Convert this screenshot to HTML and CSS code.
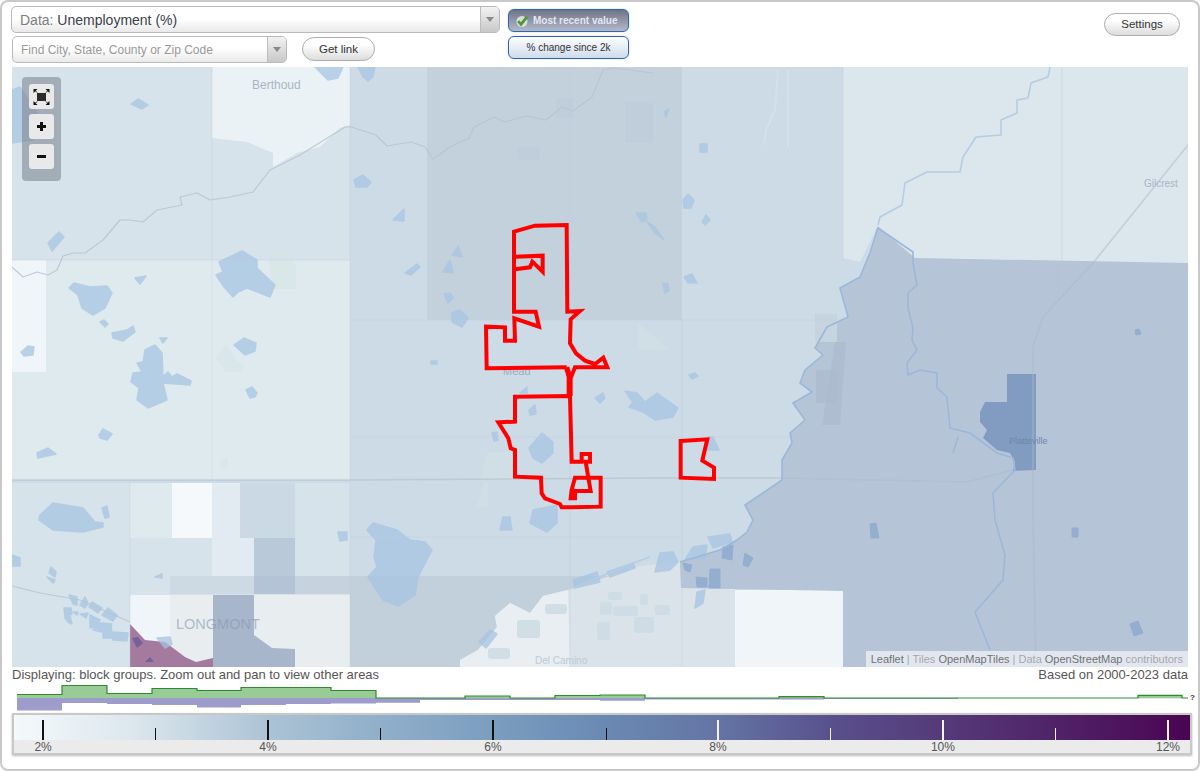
FILE: index.html
```html
<!DOCTYPE html>
<html lang="en">
<head>
<meta charset="utf-8">
<title>Unemployment map</title>
<link rel="stylesheet" href="styles.css">
</head>
<body>
<div class="frame">
  <header class="toolbar">
    <div class="selectors">
      <div class="combo combo-data">
        <div class="combo-text"><span class="muted">Data:</span> Unemployment (%)</div>
        <div class="combo-arrow"><span class="caret"></span></div>
      </div>
      <div class="find-row">
        <div class="combo combo-find">
          <div class="combo-text">Find City, State, County or Zip Code</div>
          <div class="combo-arrow"><span class="caret"></span></div>
        </div>
        <button class="pill pill-link">Get link</button>
      </div>
    </div>
    <div class="toggles">
      <button class="toggle toggle-on">
        <svg class="check" viewBox="0 0 14 14" width="14" height="14"><circle cx="7" cy="7.500" r="5.500" fill="#d9dde2"/><path d="M3.200 7.200 6 10.400 12 2.800" fill="none" stroke="#4f9a2e" stroke-width="2.800"/></svg>
        Most recent value
      </button>
      <button class="toggle">% change since 2k</button>
    </div>
    <button class="pill pill-settings">Settings</button>
  </header>

  <main class="map">
    <svg class="map-art" viewBox="12 67 1176 600" width="1176" height="600">
      <!-- choropleth tiles -->
      <rect class="t-mid" x="12" y="67" width="1176" height="600"/>
      <rect class="t-a" x="12" y="67" width="338" height="194"/>
      <polygon class="t-white" points="212,67 350,67 350,125 340,128 320,147 297,153 273,167 273,153 247,142 212,138"/>
      <rect class="t-c" x="12" y="260" width="338" height="220"/>
      <rect class="t-f" x="12" y="260" width="34" height="112"/>
      <rect class="t-dark" x="427" y="67" width="255" height="253"/>
      <polygon class="t-top" points="843,67 1188,67 1188,264 915,258 878,226 860,262 843,258"/>
      <polygon class="t-band" points="350,576 640,576 568,590 543,596 530,613 510,603 495,616 497,627 478,650 460,660 460,667 350,667"/>
      <polygon class="t-l1" points="568,590 640,566 680,562 681,588 735,589 735,667 460,667 460,660 478,650 497,627 495,616 510,603 530,613 543,596"/>
      <polygon class="t-l2" points="568,590 543,596 530,613 510,603 495,616 497,627 478,650 460,660 460,667 570,667"/>
      <rect class="t-f" x="735" y="590" width="108" height="77"/>
      <polygon class="t-p" points="878,227 915,258 1188,263 1188,667 843,667 843,591 735,589 681,588 680,562 720,550 737,540 747,532 753,520 745,505 763,493 782,480 782,460 792,443 790,433 805,420 793,403 812,392 800,383 805,370 823,355 815,348 827,327 848,317 840,288 860,277 870,253"/>
      <polygon class="t-city" points="1007,374 1036,374 1036,470 1013,471 1015,462 1010,453 997,450 983,438 987,430 980,422 980,412 985,402 1007,402"/>
      <rect class="t-pb" x="816" y="370" width="21" height="33"/>
      <polygon class="t-pb" points="835,342 846,342 840,425 822,425"/>
      <rect class="patch-light" x="815" y="314" width="22" height="28"/>
      <rect class="patch" x="625" y="103" width="28" height="40"/>
      <rect class="patch" x="518" y="147" width="22" height="13"/>
      <rect class="patch" x="556" y="98" width="18" height="20"/>
      <!-- parks -->
      <g class="parks">
        <polygon points="638,323 670,350 638,350"/>
        <polygon points="268,250 290,250 296,268 296,289 272,289"/>
        <polygon points="215,358 227,344 236,360 245,365 240,372 226,372"/>
        <polygon points="488,452 513,452 513,480 480,480"/>
        <polygon points="477,507 484,482 488,482 488,507"/>
        <polygon points="220,460 228,456 228,468 220,468"/>
      </g>
      <!-- lower-left block groups -->
      <rect class="t-a" x="12" y="483" width="338" height="184"/>
      <rect class="t-c" x="130" y="483" width="42" height="55"/>
      <rect class="t-f2" x="172" y="483" width="40" height="55"/>
      <rect class="t-d" x="212" y="483" width="28" height="55"/>
      <rect class="t-e" x="240" y="483" width="55" height="55"/>
      <rect class="t-d" x="212" y="538" width="42" height="38"/>
      <rect class="t-g" x="254" y="538" width="41" height="38"/>
      <rect class="t-h" x="170" y="576" width="84" height="18"/>
      <rect class="t-i" x="254" y="576" width="41" height="18"/>
      <rect class="t-j" x="295" y="576" width="55" height="18"/>
      <rect class="t-f" x="130" y="595" width="40" height="72"/>
      <rect class="t-k" x="170" y="595" width="43" height="72"/>
      <rect class="t-k" x="254" y="595" width="96" height="72"/>
      <rect class="t-m" x="213" y="595" width="41" height="72"/>
      <polygon class="t-m" points="254,635 272,648 295,649 295,667 254,667"/>
      <polygon class="t-n" points="130,624 145,640 165,642 185,657 196,662 213,658 213,667 130,667"/>

      <!-- water -->
      <g class="water">
        <polygon points="12,90 20,87 40,117 33,140 12,143"/>
        <polygon points="131,104 138,99 148,105 142,109"/>
        <polygon points="315,67 343,67 338,78 328,80"/>
        <polygon points="358,67 375,67 373,77 368,81 363,77"/>
        <polygon points="354,180 363,175 371,182 367,187 356,187"/>
        <polygon points="393,220 404,209 404,221"/>
        <polygon points="452,255 458,246 462,257"/>
        <polygon points="700,144 707,144 707,152 700,152"/>
        <polygon points="683,200 688,194 694,200 691,208 684,208"/>
        <polygon points="702,222 706,215 710,220 705,225"/>
        <polygon points="664,112 669,109 666,117"/>
        <polygon points="636,213 646,213 647,220 642,222"/>
        <polygon points="647,222 655,227 664,240 655,233"/>
        <polygon points="663,283 668,284 669,291 665,293"/>
        <polygon points="684,277 692,274 697,283 688,283"/>
        <polygon points="69,288 74,283 90,287 107,286 112,293 105,308 93,315 82,308 78,295"/>
        <polygon points="100,322 104,320 108,324 105,327"/>
        <polygon points="112,333 127,330 133,326 135,332 123,341 113,338"/>
        <polygon points="145,350 155,345 162,353 163,377 168,372 172,377 177,374 191,381 190,385 163,383 167,400 148,408 137,400 139,388 131,382 133,373 142,372 137,363 143,362"/>
        <polygon points="219,262 242,251 257,260 257,268 275,285 270,297 247,288 238,292 233,297 224,287 216,275 223,272"/>
        <polygon points="48,243 59,232 64,237 52,251"/>
        <polygon points="135,278 146,276 140,284"/>
        <polygon points="21,352 28,346 34,347 33,355 24,356"/>
        <polygon points="234,345 244,338 256,343 255,351 245,355"/>
        <polygon points="246,390 252,387 257,393 255,397 250,398"/>
        <polygon points="99,435 103,429 112,434 107,440 100,438"/>
        <polygon points="37,453 48,448 56,454 38,458"/>
        <polygon points="160,338 167,338 163,343"/>
        <polygon points="405,273 417,264 420,267 411,275"/>
        <polygon points="443,272 450,260 453,273"/>
        <polygon points="444,294 450,293 453,298 448,303"/>
        <polygon points="452,313 460,310 468,318 462,327 452,322"/>
        <polygon points="431,361 437,361 437,364 431,364"/>
        <polygon points="595,398 603,393 605,398 600,403"/>
        <polygon points="625,391 637,393 645,402 657,393 678,408 673,417 655,420 643,412 629,407 633,402"/>
        <polygon points="689,375 695,373 698,376 692,379"/>
        <polygon points="529,410 535,405 536,414 530,415"/>
        <polygon points="529,448 542,433 553,442 553,453 542,463 533,458"/>
        <polygon points="520,393 527,387 527,393"/>
        <polygon points="492,433 497,432 498,440 494,441"/>
        <polygon points="708,437 713,437 719,450 708,450"/>
        <polygon points="367,530 373,523 397,530 410,540 425,542 432,550 418,577 415,595 398,606 383,600 368,577 377,567 374,557 376,540"/>
        <polygon points="533,510 557,505 557,523 547,532 530,523"/>
        <polygon points="503,517 510,517 512,530 500,530"/>
        <polygon points="708,537 730,534 732,542 713,548"/>
        <polygon points="693,547 707,545 705,558 685,560"/>
        <polygon points="660,553 673,552 678,562 670,570 655,572"/>
        <polygon points="573,580 597,572 600,582 575,588"/>
        <polygon points="607,572 633,563 635,568 610,577"/>
        <polygon points="697,592 705,590 703,603 695,608"/>
        <polygon points="40,515 53,503 83,508 95,522 103,523 103,527 83,532 53,530 39,520"/>
        <polygon points="102,508 107,506 109,517 105,518"/>
        <polygon points="338,532 347,532 347,540 340,541"/>
        <polygon points="155,577 162,574 162,578"/>
        <polygon points="51,567 56,572 55,577 49,573"/>
        <polygon points="47,577 55,580 53,583"/>
        <polygon points="12,555 20,558 20,566 12,566"/>
        <polygon points="69,595 77,597 77,605 73,604"/>
        <polygon points="80,605 85,597 88,603 85,608"/>
        <polygon points="64,608 71,608 72,614 65,617"/>
        <polygon points="65,618 70,616 72,624 68,622"/>
        <polygon points="73,612 78,612 77,615"/>
        <polygon points="80,614 88,613 86,618"/>
        <polygon points="89,607 92,602 102,608 98,613"/>
        <polygon points="102,615 108,608 117,615 113,621"/>
        <polygon points="90,615 100,620 97,627 90,628"/>
        <polygon points="93,630 100,623 112,624 102,632"/>
        <polygon points="103,623 111,625 112,638 103,638"/>
        <polygon points="112,632 128,633 127,641 113,640"/>
        <polygon points="157,638 170,637 172,644 165,648"/>
        <polygon points="479,642 490,630 497,634 486,648"/>
      </g>
      <g class="water-dark">
        <polygon points="723,547 733,545 732,560 722,558"/>
        <polygon points="745,553 753,558 748,567 743,565"/>
        <polygon points="683,563 692,565 690,572 685,570"/>
        <polygon points="710,569 720,569 720,588 709,588"/>
        <polygon points="696,577 707,578 707,587 697,587"/>
        <polygon points="1135,330 1139,329 1141,334 1136,335"/>
        <polygon points="870,524 876,523 879,538 871,538"/>
        <polygon points="1130,624 1138,621 1143,633 1134,636"/>
        <polygon points="1072,528 1078,528 1078,537 1072,537"/>
      </g>
      <g class="water-p">
        <polygon points="132,638 138,637 143,643 137,648"/>
        <polygon points="145,662 150,657 154,662"/>
      </g>
      <g class="ponds">
        <rect x="613" y="606" width="25" height="10" rx="3"/>
        <rect x="655" y="605" width="15" height="10" rx="3"/>
        <rect x="597" y="622" width="13" height="18" rx="3"/>
        <rect x="517" y="620" width="23" height="18" rx="3"/>
        <rect x="488" y="648" width="22" height="11" rx="3"/>
        <rect x="640" y="594" width="8" height="11" rx="2"/>
        <rect x="600" y="602" width="12" height="13" rx="3"/>
        <rect x="634" y="617" width="20" height="16" rx="3"/>
        <rect x="545" y="604" width="22" height="10" rx="3"/>
        <rect x="608" y="592" width="14" height="8" rx="2"/>
      </g>

      <!-- roads, section lines -->
      <g class="lines">
        <path d="M212 67V480M350 67V480M570 67V667M682 320V667M843 67V260M1062 67V300M130 483V667M350 483V667M12 260H350M350 320H1000M350 437H843M350 537H682"/>
        <path class="lines-strong" d="M12 480H350L650 478 780 478 967 482 1013 470"/>
        <path class="lines-strong" d="M1188 145 1093 263 1043 317 1033 347V510L1036 667"/>
        <path class="lines-pale" d="M778 70 775 110 766 130 764 145M788 70V147"/>
      </g>
      <polyline class="creek" points="12,267 23,277 37,272 48,275 57,270 63,256 73,253 85,253 103,240 120,220 130,220 143,222 157,210 182,205 180,197 197,193 210,200 230,197 253,192 270,170 300,155 345,127 351,127 376,135 387,146 411,142 425,147 433,159 450,147 469,138 474,127 494,117 505,122 526,116 546,120 562,107 573,111 592,97 603,70 614,68 653,73"/>
      <polyline class="creek" points="12,586 40,593 80,600 130,622"/>
      <polyline class="river-light" points="878,225 880,217 902,205 905,183 927,172 960,172 963,157 976,137 1001,135 1001,120 1017,113 1017,100 1028,98 1031,83 1048,77 1050,67"/>
      <polyline class="river-light" points="573,588 633,563 650,557"/>
      <polyline class="river" points="680,562 720,550 737,540 747,532 753,520 745,505 763,493 782,480 782,460 792,443 790,433 805,420 793,403 812,392 800,383 805,370 823,355 815,348 827,327 848,317 840,288 860,277 870,253 878,227"/>
      <polyline class="river" points="878,228 913,252 913,263 917,285 908,293 908,308 913,328 912,340 917,350 907,363 908,375 920,370 937,373 937,388 947,397 950,428 970,433 997,453 1013,458 1015,470 993,493 995,520 1005,555 1003,580 975,612 990,650"/>
      <polyline class="river" points="958,437 953,453"/>

      <!-- labels -->
      <text class="lbl lbl-berthoud" x="252" y="89">Berthoud</text>
      <text class="lbl lbl-gilcrest" x="1144" y="187">Gilcrest</text>
      <text class="lbl lbl-mead" x="503" y="375">Mead</text>
      <text class="lbl lbl-platte" x="1009" y="444">Platteville</text>
      <text class="lbl lbl-longmont" x="176" y="629">LONGMONT</text>
      <text class="lbl lbl-delcamino" x="535" y="664">Del Camino</text>

      <!-- selected area -->
      <g class="selection" transform="translate(470 210) scale(.3333)">
        <path d="M132 65 195 47 290 45 292 305 330 303 302 328 300 400 318 430 345 452 375 462 400 443 412 472 315 472 302 505 302 558M290 472 50 475 48 350 105 352 105 392 135 392 133 325 207 350 197 305 132 305 132 60"/>
        <path class="spine" d="M290 472 298 500 298 555"/>
        <path d="M135 560 300 558 305 755 335 755 335 732 360 732 360 755 347 755 355 803 392 803 392 890 305 892 275 892 270 882 225 865 215 850 213 803 135 800 135 720 122 715 115 685 85 637 135 635Z"/>
        <path d="M315 803 355 803 362 843 315 843 315 865 302 865 305 840Z"/>
        <path d="M135 140 218 137 218 185 187 155 180 172 135 178"/>
        <path d="M632 693 712 688 697 752 732 773 732 807 632 803Z"/>
      </g>
    </svg>

    <div class="zoom-panel">
      <button class="zoom-btn" aria-label="Fit">
        <svg viewBox="0 0 25 25" width="25" height="25"><rect x="8" y="9" width="9" height="8" fill="#2b2b2b"/><path d="M4.500 5h4L4.500 9zM20.500 5h-4l4 4zM4.500 21h4l-4-4zM20.500 21h-4l4-4z" fill="#111"/><path d="M6 6.500 8 8.500M19 6.500 17 8.500M6 19.500 8 17.500M19 19.500 17 17.500" stroke="#111" stroke-width="1"/></svg>
      </button>
      <button class="zoom-btn" aria-label="Zoom in">
        <svg viewBox="0 0 25 25" width="25" height="25"><path d="M8 12.500h9M12.500 8v9" stroke="#111" stroke-width="3"/></svg>
      </button>
      <button class="zoom-btn" aria-label="Zoom out">
        <svg viewBox="0 0 25 25" width="25" height="25"><path d="M8 12.500h9" stroke="#111" stroke-width="3"/></svg>
      </button>
    </div>

    <div class="attribution"><span class="strong">Leaflet</span> | Tiles <span class="strong">OpenMapTiles</span> | Data <span class="strong">OpenStreetMap</span> contributors</div>
  </main>

  <div class="caption">
    <span>Displaying: block groups. Zoom out and pan to view other areas</span>
    <span>Based on 2000-2023 data</span>
  </div>

  <svg class="histogram" viewBox="12 684 1176 28" width="1176" height="28">
    <path class="h-green" d="M17 698V694.500H62V685.500H107V693.500H152V688.500H197V690.500H241V687.500H331V690.500H376V698Z"/>
    <path class="h-green" d="M465 698V696H510V698ZM555 698V695.500H600V695H645V698ZM779 698V696.700H824V698ZM1138 698V695.300H1182V698Z"/>
    <path class="h-purple" d="M17 698H958V699H824V699.500H645V700.700H600V700H420V702.700H376V703.500H331V704H286V705H241V707.500H197V705H152V704H107V703H62V710.500H17Z"/>
    <path class="h-purple" d="M1138 698H1182V698.300H1138Z"/>
    <path class="h-line" d="M17 694.500H62V685.500H107V693.500H152V688.500H197V690.500H241V687.500H331V690.500H376V698H465V696H510V698H555V695.500H600V695H645V698H779V696.700H824V698H1138V695.300H1182V698H1188"/>
    <text class="h-q" x="1190" y="700">?</text>
  </svg>

  <div class="legend">
    <div class="legend-bar">
      <span class="tick major" style="left:2.47%"><b>2%</b></span>
      <span class="tick minor" style="left:12.03%"></span>
      <span class="tick major" style="left:21.6%"><b>4%</b></span>
      <span class="tick minor" style="left:31.16%"></span>
      <span class="tick major" style="left:40.73%"><b>6%</b></span>
      <span class="tick minor" style="left:50.3%"></span>
      <span class="tick major light" style="left:59.86%"><b>8%</b></span>
      <span class="tick minor light" style="left:69.43%"></span>
      <span class="tick major light" style="left:78.99%"><b>10%</b></span>
      <span class="tick minor light" style="left:88.55%"></span>
      <span class="tick major light" style="left:98.13%"><b>12%</b></span>
    </div>
  </div>
</div>
</body>
</html>
```
FILE: styles.css
```css
* { box-sizing: border-box; }
html, body { margin: 0; padding: 0; background: #fff; }
body { font-family: "Liberation Sans", Arial, sans-serif; color: #444; }

.frame {
  width: 1200px;
  height: 771px;
  border: 2px solid #c9c9c9;
  border-radius: 8px;
  padding: 0 10px;
  background: #fff;
  overflow: hidden;
}

/* toolbar */
.toolbar { display: flex; align-items: flex-start; height: 65px; position: relative; }
.selectors { display: flex; flex-direction: column; gap: 3px; width: 489px; margin-left: -1px; padding-top: 4px; flex: none; }
.combo {
  display: flex;
  border: 1px solid #b9b9b9;
  border-radius: 5px;
  background: linear-gradient(#fff 45%, #e9e9e9);
  overflow: hidden;
}
.combo-data { height: 27px; }
.combo-find { height: 27px; width: 275px; margin-left: 1px; }
.combo-text { flex: 1; padding-left: 8px; display: flex; align-items: center; white-space: pre; }
.combo-data .combo-text { font-size: 14px; color: #3a414c; }
.combo-find .combo-text { font-size: 12px; color: #999; }
.muted { color: #7d7d7d; }
.combo-arrow {
  width: 19px;
  border-left: 1px solid #bdbdbd;
  background: linear-gradient(#f2f2f2, #c8c8c8);
  display: flex; align-items: center; justify-content: center;
}
.caret { width: 0; height: 0; border: 4px solid transparent; border-top: 5px solid #8a8a8a; border-bottom: 0; }
.find-row { display: flex; align-items: flex-start; gap: 15px; }

.pill {
  font-family: inherit;
  font-size: 11.500px;
  color: #333;
  padding: 0;
  border: 1px solid #adadad;
  border-radius: 12px;
  background: linear-gradient(#fff 30%, #dcdcdc);
}
.pill-link { width: 73px; height: 24px; margin-top: 1px; }
.pill-settings { position: absolute; right: 8px; top: 11px; width: 76px; height: 23px; padding-bottom: 2px; }

.toggles { display: flex; flex-direction: column; gap: 4px; margin-left: 8px; padding-top: 7px; }
.toggle {
  width: 121px;
  height: 23px;
  padding: 0;
  display: flex; align-items: center; justify-content: center; gap: 4px;
  font-family: inherit;
  font-size: 10px;
  color: #333;
  border: 1.500px solid #2c69a8;
  border-radius: 6px;
  background: linear-gradient(#fdfeff, #cfdcea);
  box-shadow: 0 0 2px #c9c9c9;
}
.toggle-on {
  font-weight: bold;
  color: #e4e8ee;
  background: linear-gradient(#6f7386, #b4b8cc);
  justify-content: flex-start;
  padding-left: 6px;
}

/* map */
.map { position: relative; width: 1176px; height: 600px; overflow: hidden; background: #cddbe7; }
.map-art { display: block; }
.t-mid { fill: #cddbe7; }
.t-a { fill: #d6e3eb; }
.t-c { fill: #dfeaef; }
.t-white { fill: #ebf2f5; }
.t-f { fill: #eff5f8; }
.t-f2 { fill: #f5f9fb; }
.t-dark { fill: #c3d1dd; }
.t-top { fill: #dbe6ed; }
.t-band { fill: #c2d0dc; }
.t-l1 { fill: #d9e3e9; }
.t-l2 { fill: #e8eef1; }
.t-p { fill: #b6c4d8; }
.t-pb { fill: #adbacd; fill-opacity: .7; }
.t-city { fill: #819cc0; }
.t-d { fill: #e2ebf1; }
.t-e { fill: #cbd9e5; }
.t-g { fill: #bac9da; }
.t-h { fill: #cddae3; }
.t-i { fill: #b4c3d6; }
.t-j { fill: #c6d3df; }
.t-k { fill: #e8edf0; }
.t-m { fill: #a8b6cc; }
.t-n { fill: #a47b9e; }
.patch { fill: #b9c8d5; fill-opacity: .3; }
.patch-light { fill: #c5d4df; }
.parks polygon { fill: #d4e4e2; fill-opacity: .45; }

.water { opacity: .74; }
.water polygon { fill: #a6c5e2; stroke: #a6c5e2; stroke-width: 1.500; stroke-linejoin: round; }
.water-dark polygon { fill: #94aed0; stroke: #94aed0; stroke-width: 1; stroke-linejoin: round; }
.water-p polygon { fill: #76609a; }
.ponds rect { fill: #cbd9e4; fill-opacity: .8; }

.lines { fill: none; stroke: #bccbd8; stroke-width: 1; stroke-opacity: .38; }
.lines .lines-strong { stroke: #a9b9c9; stroke-width: 1.600; stroke-opacity: .5; }
.lines .lines-pale { stroke: #dbe5ec; stroke-width: 2; stroke-opacity: .6; }
.creek { fill: none; stroke: #b5c4d1; stroke-width: 1.200; stroke-linejoin: round; stroke-opacity: .85; }
.river { fill: none; stroke: #9ab8da; stroke-width: 1.600; stroke-linejoin: round; }
.river-light { fill: none; stroke: #b4cde3; stroke-width: 1.600; stroke-linejoin: round; }

.lbl { font-family: "Liberation Sans", Arial, sans-serif; fill: #a7b6c5; }
.lbl-berthoud { font-size: 12px; }
.lbl-gilcrest { font-size: 10px; }
.lbl-mead { font-size: 11px; fill: #9dacbc; }
.lbl-platte { font-size: 9px; fill: #6f86a8; }
.lbl-longmont { font-size: 14.500px; fill: #8496ad; fill-opacity: .6; }
.lbl-delcamino { font-size: 10px; fill: #bccad6; }

.selection path { fill: none; stroke: #ff0000; stroke-width: 12; stroke-linejoin: miter; }
.selection .spine { stroke-width: 16; }

.zoom-panel {
  position: absolute;
  left: 10px; top: 10px;
  width: 39px; height: 104px;
  padding: 7px;
  display: flex; flex-direction: column; gap: 5px;
  background: rgba(120, 130, 140, .55);
  border-radius: 4px;
}
.zoom-btn {
  width: 25px; height: 25px; padding: 0; border: 0;
  border-radius: 3px;
  background: #e9e9e9;
  flex: none;
}
.zoom-btn svg { display: block; }

.attribution {
  position: absolute;
  right: 0; bottom: 0;
  height: 16px; padding: 0 5px;
  font-size: 11px; line-height: 16px;
  color: #a3a8ad;
  background: rgba(255, 255, 255, .6);
  white-space: nowrap;
}
.attribution .strong { color: #6e7275; }

/* footer */
.caption {
  display: flex; justify-content: space-between;
  height: 15px; line-height: 15px;
  font-size: 13px; color: #555;
}
.histogram { display: block; margin-top: 2px; overflow: visible; }
.h-green { fill: #98cb96; }
.h-purple { fill: #9d9ccb; }
.h-line { fill: none; stroke: #2e8b2e; stroke-width: 1.200; }
.h-q { font-size: 8px; font-weight: bold; fill: #333; font-family: "Liberation Sans", Arial, sans-serif; }

.legend {
  width: 1180px;
  height: 42px;
  margin-top: 1px;
  border: 2px solid #c8c8c4;
  background: #ebebeb;
  box-shadow: 0 1px 2px #bbb;
}
.legend-bar {
  position: relative;
  height: 25px;
  background: linear-gradient(90deg, #f4f9fb 0, #dce7ee 10%, #acc3d5 21.6%, #93b1cb 30%, #7b9ebf 40.7%, #6a8ab3 50%, #6474a4 59.9%, #584f8b 70%, #553a79 79%, #4f1f65 90%, #4a0552 100%);
}
.tick { position: absolute; bottom: 0; background: #111; }
.tick.light { background: #f4f4f4; }
.tick.major { width: 2px; height: 20px; margin-left: -1px; }
.tick.minor { width: 1px; height: 12px; }
.tick b {
  position: absolute; top: 20px; left: 1px;
  transform: translateX(-50%);
  font-weight: normal; font-size: 12px; line-height: 14px; color: #555;
}
```
